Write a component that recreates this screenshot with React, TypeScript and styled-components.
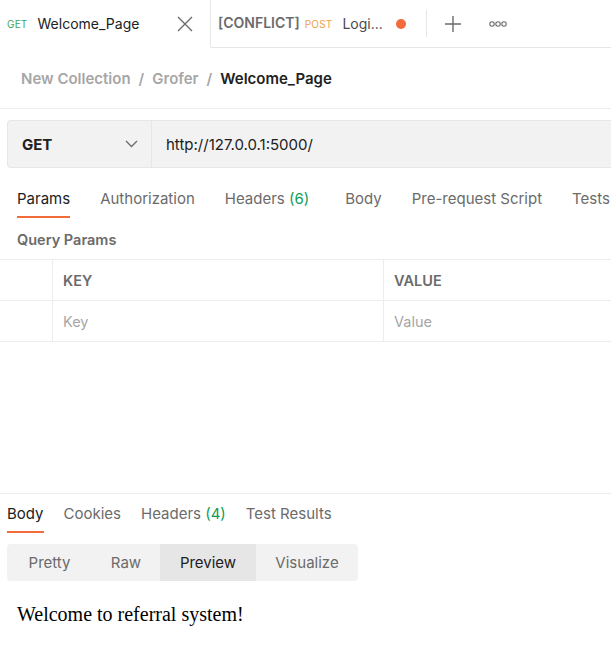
import styled, { createGlobalStyle } from 'styled-components'

const GlobalStyle = createGlobalStyle`
  body {
    margin: 0;
    background: #ffffff;
    font-family: Inter, "Noto Sans", sans-serif;
    color: #212121;
    overflow: hidden;
  }
`

const Page = styled.div`
  width: 611px;
  height: 669px;
  display: flex;
  flex-direction: column;
  overflow: hidden;
`

const TabBar = styled.div`
  display: flex;
  align-items: stretch;
  height: 48px;
`

const Tab = styled.div<{ $active?: boolean; $width: number }>`
  display: flex;
  align-items: center;
  width: ${(p) => p.$width}px;
  box-sizing: border-box;
  padding-left: 7px;
  border-right: 1px solid #e6e6e6;
  border-bottom: 1px solid ${(p) => (p.$active ? 'transparent' : '#e6e6e6')};
`

const RequestTab = styled.div`
  display: flex;
  align-items: center;
  width: 215px;
  height: 100%;
  padding-left: 7px;
  box-sizing: border-box;
`

const Method = styled.span<{ $color: string }>`
  font-size: 10px;
  color: ${(p) => p.$color};
  margin-right: 10px;
  letter-spacing: 0.2px;
`

const TabName = styled.span<{ $muted?: boolean }>`
  font-size: 14px;
  color: ${(p) => (p.$muted ? '#4a4a4a' : '#212121')};
  flex: 1;
`

const Conflict = styled.span`
  font-size: 14px;
  font-weight: 600;
  color: #6b6b6b;
  margin-right: 5px;
  position: relative;
  top: -1px;
`

const CloseBtn = styled.span`
  display: flex;
  margin-right: 17px;
`

const Dot = styled.span`
  width: 10px;
  height: 10px;
  border-radius: 50%;
  background: #f26b3a;
  margin-right: 20px;
`

const TabTools = styled.div`
  flex: 1;
  display: flex;
  align-items: center;
  border-bottom: 1px solid #e6e6e6;
`

const ToolBtn = styled.span`
  display: flex;
  align-items: center;
  justify-content: center;
  width: 45px;
  height: 100%;
`

const Divider = styled.span`
  width: 1px;
  height: 27px;
  background: #e6e6e6;
  margin-right: 3px;
`

const Breadcrumb = styled.div`
  height: 60px;
  display: flex;
  align-items: center;
  padding-left: 21px;
  gap: 8px;
  font-size: 15px;
  font-weight: 600;
  border-bottom: 1px solid #ededed;
`

const Crumb = styled.span<{ $current?: boolean }>`
  color: ${(p) => (p.$current ? '#212121' : '#a6a6a6')};
`

const UrlBar = styled.div`
  margin: 11px 0 0 7px;
  height: 48px;
  display: flex;
  align-items: center;
  background: #f2f2f2;
  border: 1px solid #e6e6e6;
  border-right: none;
  border-radius: 4px 0 0 4px;
  box-sizing: border-box;
`

const MethodSelect = styled.div`
  width: 144px;
  height: 100%;
  display: flex;
  align-items: center;
  justify-content: space-between;
  padding: 0 13px 0 14px;
  box-sizing: border-box;
  border-right: 1px solid #e6e6e6;
  font-size: 15px;
  font-weight: 700;
  color: #212121;
`

const UrlText = styled.span`
  margin-left: 14px;
  font-size: 15px;
  color: #212121;
`

const TabRow = styled.div<{ $left: number; $gap: number; $top: number }>`
  display: flex;
  gap: ${(p) => p.$gap}px;
  padding-left: ${(p) => p.$left}px;
  margin-top: ${(p) => p.$top}px;
  white-space: nowrap;
`

const NavTab = styled.div<{ $active?: boolean; $extra?: number }>`
  font-size: 15px;
  color: ${(p) => (p.$active ? '#212121' : '#6b6b6b')};
  padding: 8px 0 8px;
  margin-right: ${(p) => p.$extra ?? 0}px;
  border-bottom: 2px solid ${(p) => (p.$active ? '#f26b3a' : 'transparent')};
`

const Count = styled.span`
  color: #0f9d58;
`

const SectionTitle = styled.div`
  font-size: 14.5px;
  font-weight: 600;
  color: #6b6b6b;
  padding: 13px 0 0 17px;
  height: 28px;
`

const Table = styled.div`
  display: grid;
  grid-template-columns: 52px 331px 1fr;
  border-top: 1px solid #ededed;
`

const Cell = styled.div<{ $head?: boolean }>`
  height: 41px;
  display: flex;
  align-items: center;
  padding-left: 10px;
  box-sizing: border-box;
  border-bottom: 1px solid #ededed;
  border-left: 1px solid #ededed;
  font-size: 14.5px;
  font-weight: ${(p) => (p.$head ? 600 : 400)};
  color: ${(p) => (p.$head ? '#6b6b6b' : '#a6a6a6')};
  &:nth-child(3n + 1) {
    border-left: none;
  }
`

const Spacer = styled.div`
  height: 151px;
`

const ResponsePane = styled.div`
  border-top: 1px solid #ededed;
  display: flex;
  flex-direction: column;
`

const Segmented = styled.div`
  margin: 11px 0 0 7px;
  width: 351px;
  height: 37px;
  display: flex;
  background: #f2f2f2;
  border-radius: 4px;
  overflow: hidden;
`

const Segment = styled.div<{ $active?: boolean; $width: number }>`
  width: ${(p) => p.$width}px;
  display: flex;
  align-items: center;
  justify-content: center;
  font-size: 15px;
  color: ${(p) => (p.$active ? '#212121' : '#6b6b6b')};
  background: ${(p) => (p.$active ? '#e6e6e6' : 'transparent')};
`

const Preview = styled.div`
  padding: 22px 0 0 17px;
  font-family: "Liberation Serif", "Times New Roman", serif;
  font-size: 20px;
  color: #000;
`

function CloseIcon() {
  return (
    <svg width="16" height="16" viewBox="0 0 16 16" fill="none" stroke="#6b6b6b" strokeWidth="1.4">
      <path d="M1 1L15 15M15 1L1 15" />
    </svg>
  )
}

function PlusIcon() {
  return (
    <svg width="18" height="18" viewBox="0 0 18 18" fill="none" stroke="#6b6b6b" strokeWidth="1.4">
      <path d="M9 1V17M1 9H17" />
    </svg>
  )
}

function MoreIcon() {
  return (
    <svg width="18" height="6" viewBox="0 0 18 6" fill="none" stroke="#6b6b6b" strokeWidth="1.1">
      <circle cx="3" cy="3" r="2.2" />
      <circle cx="9" cy="3" r="2.2" />
      <circle cx="15" cy="3" r="2.2" />
    </svg>
  )
}

function ChevronIcon() {
  return (
    <svg width="13" height="8" viewBox="0 0 13 8" fill="none" stroke="#6b6b6b" strokeWidth="1.3">
      <path d="M1 1L6.5 6.5L12 1" />
    </svg>
  )
}

const requestTabs = ['Params', 'Authorization', 'Headers', 'Body', 'Pre-request Script', 'Tests']
const responseTabs = ['Body', 'Cookies', 'Headers', 'Test Results']
const segments = [
  { label: 'Pretty', width: 85 },
  { label: 'Raw', width: 68 },
  { label: 'Preview', width: 96, active: true },
  { label: 'Visualize', width: 102 },
]

function App() {
  return (
    <Page>
      <GlobalStyle />
      <TabBar>
        <Tab $active $width={211}>
          <Method $color="#3aa55b">GET</Method>
          <TabName>Welcome_Page</TabName>
          <CloseBtn>
            <CloseIcon />
          </CloseBtn>
        </Tab>
        <TabTools>
          <RequestTab>
            <Conflict>[CONFLICT]</Conflict>
            <Method $color="#eda14a">POST</Method>
            <TabName $muted>Logi...</TabName>
            <Dot />
          </RequestTab>
          <Divider />
          <ToolBtn>
            <PlusIcon />
          </ToolBtn>
          <ToolBtn>
            <MoreIcon />
          </ToolBtn>
        </TabTools>
      </TabBar>

      <Breadcrumb>
        <Crumb>New Collection</Crumb>
        <Crumb>/</Crumb>
        <Crumb>Grofer</Crumb>
        <Crumb>/</Crumb>
        <Crumb $current>Welcome_Page</Crumb>
      </Breadcrumb>

      <UrlBar>
        <MethodSelect>
          GET
          <ChevronIcon />
        </MethodSelect>
        <UrlText>http://127.0.0.1:5000/</UrlText>
      </UrlBar>

      <TabRow $left={17} $gap={30} $top={13}>
        {requestTabs.map((t, i) => (
          <NavTab key={t} $active={i === 0} $extra={t === 'Headers' ? 6 : 0}>
            {t}
            {t === 'Headers' && (
              <>
                {' '}
                <Count>(6)</Count>
              </>
            )}
          </NavTab>
        ))}
      </TabRow>

      <SectionTitle>Query Params</SectionTitle>

      <Table>
        <Cell $head />
        <Cell $head>KEY</Cell>
        <Cell $head>VALUE</Cell>
        <Cell />
        <Cell>Key</Cell>
        <Cell>Value</Cell>
      </Table>

      <Spacer />

      <ResponsePane>
        <TabRow $left={7} $gap={20} $top={2}>
          {responseTabs.map((t, i) => (
            <NavTab key={t} $active={i === 0}>
              {t}
              {t === 'Headers' && (
                <>
                  {' '}
                  <Count>(4)</Count>
                </>
              )}
            </NavTab>
          ))}
        </TabRow>
        <Segmented>
          {segments.map((s) => (
            <Segment key={s.label} $width={s.width} $active={s.active}>
              {s.label}
            </Segment>
          ))}
        </Segmented>
        <Preview>Welcome to referral system!</Preview>
      </ResponsePane>
    </Page>
  )
}

export default App
